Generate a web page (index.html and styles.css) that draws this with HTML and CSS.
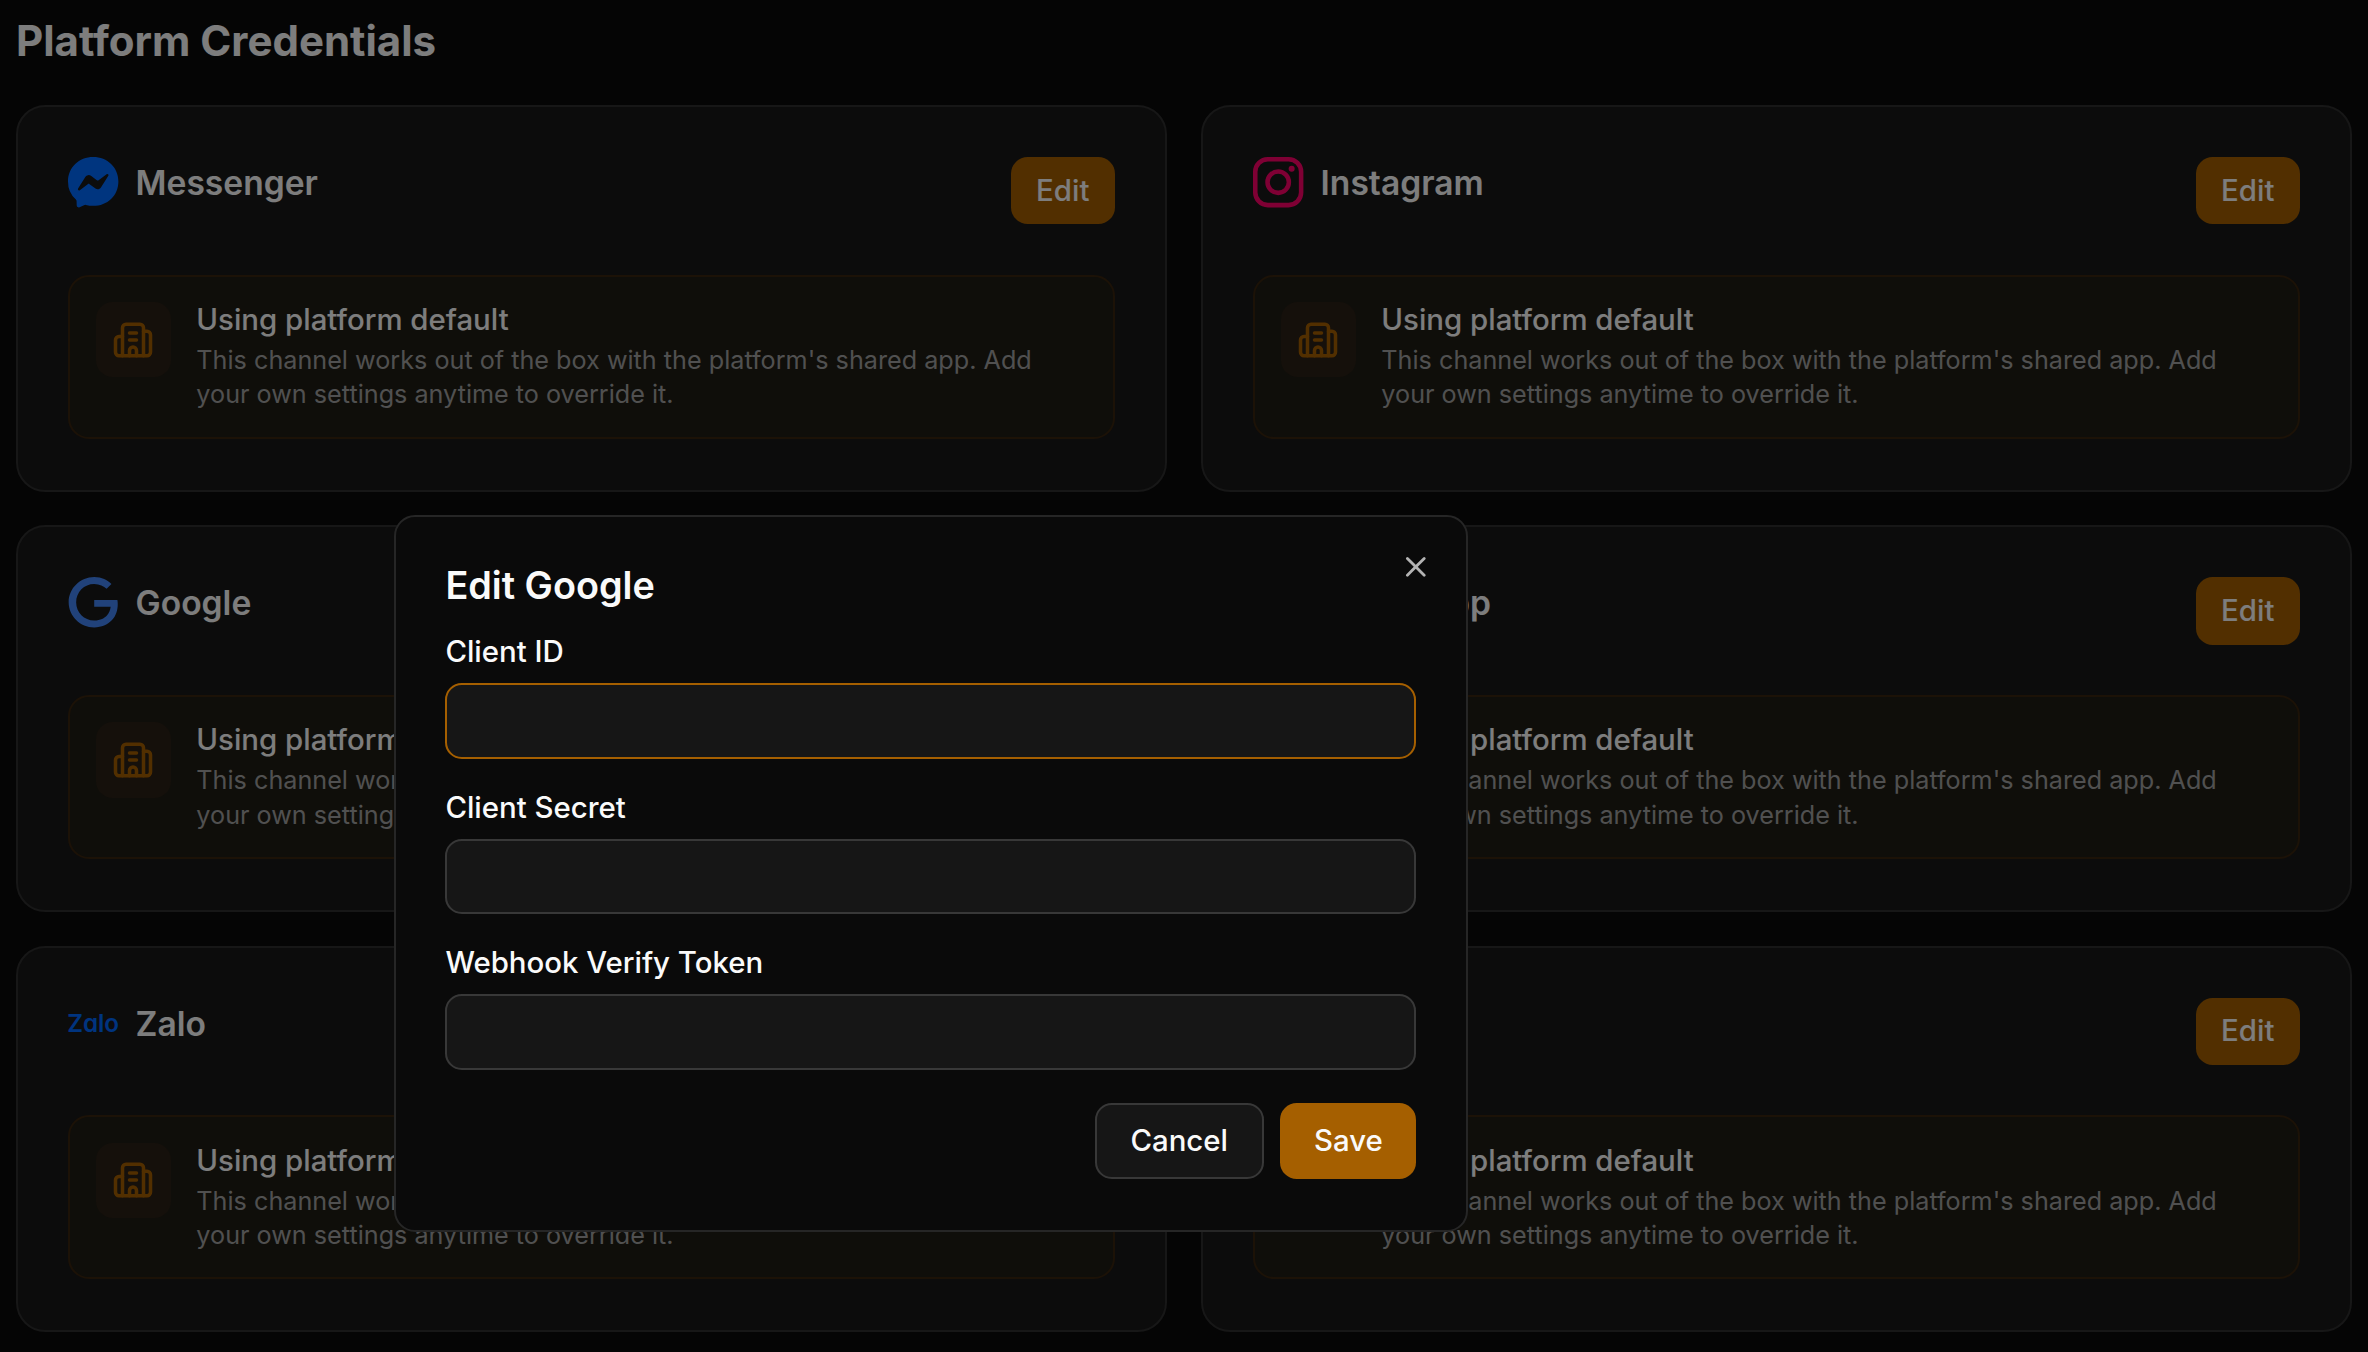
FILE: index.html
```html
<!DOCTYPE html>
<html lang="en">
<head>
	<meta charset="utf-8">
	<title>Platform Credentials</title>
	<link rel="stylesheet" href="styles.css">
</head>
<body>
	<svg class="sprite" width="0" height="0">
		<symbol id="building" viewBox="0 0 24 24">
			<path d="M10 12h4"/>
			<path d="M10 8h4"/>
			<path d="M14 21v-3a2 2 0 0 0-4 0v3"/>
			<path d="M6 10H4a2 2 0 0 0-2 2v7a2 2 0 0 0 2 2h16a2 2 0 0 0 2-2V9a2 2 0 0 0-2-2h-2"/>
			<path d="M6 21V5a2 2 0 0 1 2-2h8a2 2 0 0 1 2 2v16"/>
		</symbol>
	</svg>

	<main class="page">
		<h1 class="page-title">Platform Credentials</h1>
		<div class="cards">
			<section class="card">
				<div class="card-header">
					<div class="channel">
						<svg class="channel-icon messenger" viewBox="0 0 24 24"><path d="M.001 11.639C.001 4.949 5.241 0 12.001 0S24 4.95 24 11.639c0 6.689-5.24 11.638-12 11.638-1.21 0-2.38-.16-3.47-.46a.96.96 0 00-.64.05l-2.39 1.05a.96.96 0 01-1.35-.85l-.07-2.14a.97.97 0 00-.32-.68A11.39 11.389 0 01.002 11.64zm8.32-2.19l-3.52 5.6c-.35.53.32 1.139.82.75l3.79-2.87c.26-.2.6-.2.87 0l2.8 2.1c.84.63 2.04.4 2.6-.48l3.52-5.6c.35-.53-.32-1.13-.82-.75l-3.79 2.87c-.25.2-.6.2-.86 0l-2.8-2.1a1.8 1.8 0 00-2.61.48z"/></svg>
						<h2>Messenger</h2>
					</div>
					<button class="btn btn-edit">Edit</button>
				</div>
				<div class="notice">
					<div class="notice-icon"><svg><use href="#building"/></svg></div>
					<div class="notice-text">
						<h3>Using platform default</h3>
						<p>This channel works out of the box with the platform's shared app. Add your own settings anytime to override it.</p>
					</div>
				</div>
			</section>

			<section class="card">
				<div class="card-header">
					<div class="channel">
						<svg class="channel-icon instagram" viewBox="0 0 24 24">
							<rect x="1.08" y="1.08" width="21.84" height="21.84" rx="6"/>
							<circle cx="12" cy="12" r="5.08"/>
							<circle class="dot" cx="18.41" cy="5.59" r="1.44"/>
						</svg>
						<h2>Instagram</h2>
					</div>
					<button class="btn btn-edit">Edit</button>
				</div>
				<div class="notice">
					<div class="notice-icon"><svg><use href="#building"/></svg></div>
					<div class="notice-text">
						<h3>Using platform default</h3>
						<p>This channel works out of the box with the platform's shared app. Add your own settings anytime to override it.</p>
					</div>
				</div>
			</section>

			<section class="card">
				<div class="card-header">
					<div class="channel">
						<svg class="channel-icon google" viewBox="0 0 24 24"><path d="M12.48 10.92v3.28h7.84c-.24 1.84-.853 3.187-1.787 4.133-1.147 1.147-2.933 2.4-6.053 2.4-4.827 0-8.6-3.893-8.6-8.72s3.773-8.72 8.6-8.72c2.6 0 4.507 1.027 5.907 2.347l2.307-2.307C18.747 1.44 16.133 0 12.48 0 5.867 0 .307 5.387.307 12s5.56 12 12.173 12c3.573 0 6.267-1.173 8.373-3.36 2.16-2.16 2.84-5.213 2.84-7.667 0-.76-.053-1.467-.173-2.053H12.48z"/></svg>
						<h2>Google</h2>
					</div>
				</div>
				<div class="notice">
					<div class="notice-icon"><svg><use href="#building"/></svg></div>
					<div class="notice-text">
						<h3>Using platform default</h3>
						<p>This channel works out of the box with the platform's shared app. Add your own settings anytime to override it.</p>
					</div>
				</div>
			</section>

			<section class="card">
				<div class="card-header">
					<div class="channel">
						<svg class="channel-icon" viewBox="0 0 24 24"></svg>
						<h2>WhatsApp</h2>
					</div>
					<button class="btn btn-edit">Edit</button>
				</div>
				<div class="notice">
					<div class="notice-icon"><svg><use href="#building"/></svg></div>
					<div class="notice-text">
						<h3>Using platform default</h3>
						<p>This channel works out of the box with the platform's shared app. Add your own settings anytime to override it.</p>
					</div>
				</div>
			</section>

			<section class="card">
				<div class="card-header">
					<div class="channel">
						<svg class="channel-icon zalo" viewBox="0 0 24 24"><text x="-0.4" y="16" textLength="24.7" lengthAdjust="spacingAndGlyphs">Zalo</text></svg>
						<h2>Zalo</h2>
					</div>
				</div>
				<div class="notice">
					<div class="notice-icon"><svg><use href="#building"/></svg></div>
					<div class="notice-text">
						<h3>Using platform default</h3>
						<p>This channel works out of the box with the platform's shared app. Add your own settings anytime to override it.</p>
					</div>
				</div>
			</section>

			<section class="card">
				<div class="card-header">
					<div class="channel"></div>
					<button class="btn btn-edit">Edit</button>
				</div>
				<div class="notice">
					<div class="notice-icon"><svg><use href="#building"/></svg></div>
					<div class="notice-text">
						<h3>Using platform default</h3>
						<p>This channel works out of the box with the platform's shared app. Add your own settings anytime to override it.</p>
					</div>
				</div>
			</section>
		</div>
	</main>

	<div class="overlay"></div>
	<form class="modal">
		<button type="button" class="modal-close" aria-label="Close">
			<svg viewBox="0 0 24 24"><path d="M18 6 6 18"/><path d="m6 6 12 12"/></svg>
		</button>
		<h2 class="modal-title">Edit Google</h2>
		<div class="field">
			<label for="client-id">Client ID</label>
			<input id="client-id" class="active" type="text">
		</div>
		<div class="field">
			<label for="client-secret">Client Secret</label>
			<input id="client-secret" type="text">
		</div>
		<div class="field">
			<label for="verify-token">Webhook Verify Token</label>
			<input id="verify-token" type="text">
		</div>
		<div class="modal-footer">
			<button type="button" class="btn btn-cancel">Cancel</button>
			<button type="button" class="btn btn-save">Save</button>
		</div>
	</form>
</body>
</html>
```

FILE: styles.css
```css
*{
	box-sizing: border-box;
	margin: 0;
}
body{
	background: #0a0a0a;
	color: #fafafa;
	font-family: Inter, "Liberation Sans", sans-serif;
	font-size: 29.4px;
	height: 1352px;
	overflow: hidden;
}
.sprite{
	position: absolute;
}
.page{
	padding: 12px 16px 0;
}
.page-title{
	font-size: 42px;
	font-weight: 700;
	line-height: 58.8px;
	margin-bottom: 34px;
}
.cards{
	display: grid;
	grid-template-columns: 1fr 1fr;
	gap: 33.6px 34px;
}
.card{
	height: 386.8px;
	padding: 50.2px 50.4px;
	background: #181818;
	border: 2px solid #2e2e2e;
	border-radius: 29.4px;
}
.card-header{
	display: flex;
	justify-content: space-between;
	align-items: flex-start;
	height: 67.2px;
	margin-bottom: 50.4px;
}
.channel{
	display: flex;
	align-items: center;
	gap: 16.8px;
}
.channel h2{
	padding-top: 1.6px;
	font-size: 33.6px;
	font-weight: 600;
	line-height: 48px;
}
.channel-icon{
	width: 50.4px;
	height: 50.4px;
	overflow: visible;
}
.messenger{
	fill: #006aff;
}
.google{
	fill: #4285f4;
}
.instagram{
	fill: none;
	stroke: #ff0069;
	stroke-width: 2.16;
}
.instagram .dot{
	fill: #ff0069;
	stroke: none;
}
.zalo text{
	fill: #0068ff;
	font-size: 11.8px;
	font-weight: 600;
	font-feature-settings: "cv11";
}
.btn{
	border: 0;
	border-radius: 16.8px;
	color: #fafafa;
	font-family: inherit;
	font-size: 29.4px;
	font-weight: 500;
	line-height: 42px;
}
.btn-edit{
	height: 67.2px;
	padding: 0 25.2px;
	background: #a55f00;
}

/* platform default notice */
.notice{
	display: flex;
	gap: 25.2px;
	height: 164px;
	padding: 25.2px;
	background: #1e1c14;
	border: 2px solid #38240e;
	border-radius: 21px;
}
.notice-icon{
	flex: none;
	display: flex;
	align-items: center;
	justify-content: center;
	width: 75.6px;
	height: 75.6px;
	background: #2a2016;
	border-radius: 16.8px;
}
.notice-icon svg{
	width: 42px;
	height: 42px;
	fill: none;
	stroke: #a55f00;
	stroke-width: 2;
	stroke-linecap: round;
	stroke-linejoin: round;
}
.notice-text h3{
	margin-bottom: 5px;
	font-size: 29.4px;
	font-weight: 500;
	line-height: 36px;
}
.notice-text p{
	color: #a1a1a1;
	font-size: 25.2px;
	line-height: 34.65px;
}

/* dialog */
.overlay{
	position: fixed;
	inset: 0;
	background: rgba(0,0,0,.5);
}
.modal{
	position: absolute;
	left: 394px;
	top: 515px;
	width: 1074.4px;
	height: 716.6px;
	padding: 50px 50px 50px 49.4px;
	display: flex;
	flex-direction: column;
	gap: 33.6px;
	background: #0a0a0a;
	border: 2px solid #262626;
	border-radius: 21px;
}
.modal-close{
	position: absolute;
	top: 33px;
	right: 33.6px;
	width: 33.6px;
	height: 33.6px;
	padding: 0;
	border: 0;
	background: none;
}
.modal-close svg{
	display: block;
	width: 33.6px;
	height: 33.6px;
	fill: none;
	stroke: #b3b3b3;
	stroke-width: 2;
	stroke-linecap: round;
}
.modal-title{
	margin-bottom: -1.2px;
	font-size: 37.8px;
	font-weight: 600;
	line-height: 37.8px;
}
.field{
	display: flex;
	flex-direction: column;
	gap: 16.8px;
}
.field label{
	font-weight: 500;
	line-height: 29.4px;
}
.field input{
	height: 75.6px;
	padding: 0 25.2px;
	background: #161616;
	border: 2px solid #383838;
	border-radius: 16.8px;
	color: #fafafa;
	font: inherit;
	outline: 0;
}
.field input.active{
	border-color: #a55f00;
}
.modal-footer{
	display: flex;
	justify-content: flex-end;
	gap: 16.8px;
	margin-top: -.4px;
}
.btn-cancel, .btn-save{
	height: 75.6px;
	padding: 0 33.6px;
}
.btn-cancel{
	background: #161616;
	border: 2px solid #383838;
}
.btn-save{
	background: #a55f00;
}
```
